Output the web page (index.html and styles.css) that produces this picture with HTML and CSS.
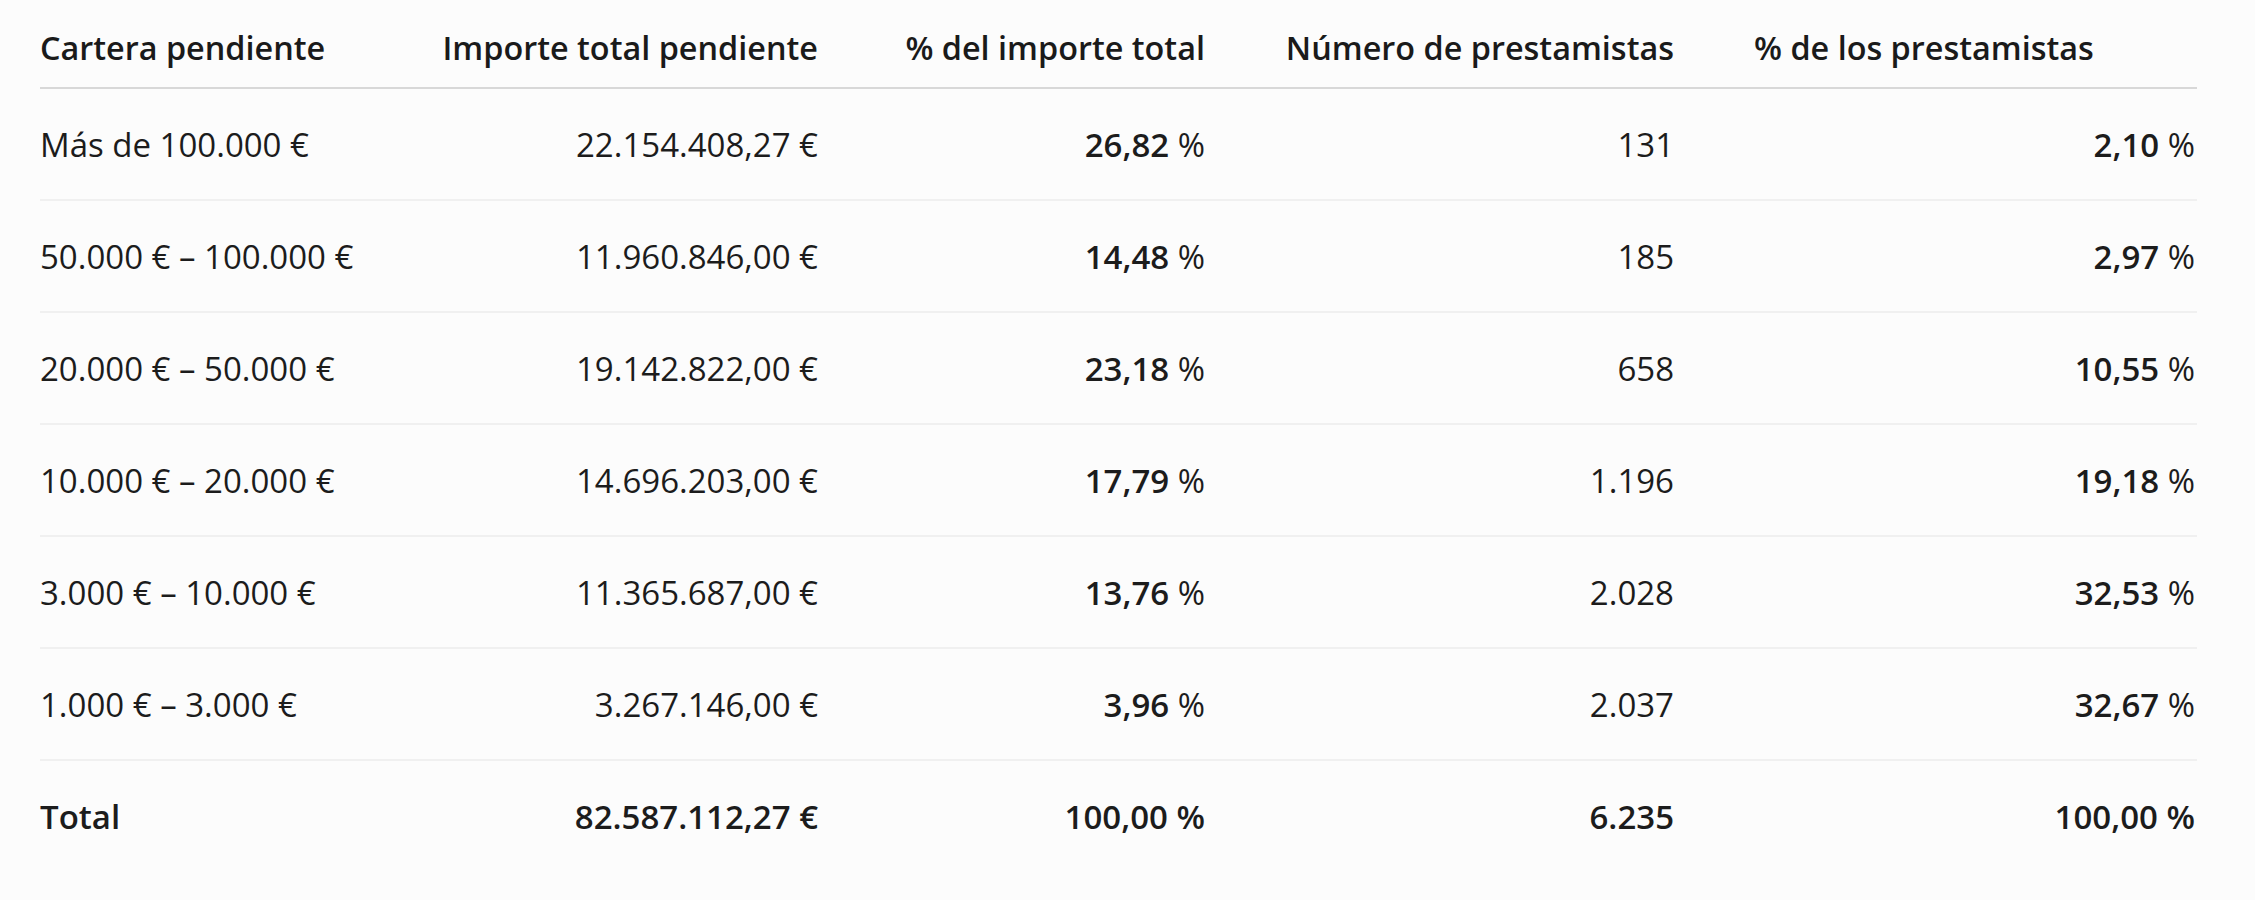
FILE: index.html
```html
<!DOCTYPE html>
<html lang="es">
<head>
<meta charset="utf-8">
<title>Cartera pendiente</title>
<link rel="stylesheet" href="styles.css">
</head>
<body>
<div class="wrap">
<table class="tbl">
  <colgroup>
    <col class="c1"><col class="c2"><col class="c3"><col class="c4"><col class="c5">
  </colgroup>
  <thead>
    <tr>
      <th class="left first">Cartera pendiente</th>
      <th class="right">Importe total pendiente</th>
      <th class="right">% del importe total</th>
      <th class="right">Número de prestamistas</th>
      <th class="left last">% de los prestamistas</th>
    </tr>
  </thead>
  <tbody>
    <tr>
      <td class="first">Más de 100.000 €</td>
      <td class="right">22.154.408,27 €</td>
      <td class="right"><b>26,82</b> %</td>
      <td class="right">131</td>
      <td class="right last"><b>2,10</b> %</td>
    </tr>
    <tr>
      <td class="first">50.000 € – 100.000 €</td>
      <td class="right">11.960.846,00 €</td>
      <td class="right"><b>14,48</b> %</td>
      <td class="right">185</td>
      <td class="right last"><b>2,97</b> %</td>
    </tr>
    <tr>
      <td class="first">20.000 € – 50.000 €</td>
      <td class="right">19.142.822,00 €</td>
      <td class="right"><b>23,18</b> %</td>
      <td class="right">658</td>
      <td class="right last"><b>10,55</b> %</td>
    </tr>
    <tr>
      <td class="first">10.000 € – 20.000 €</td>
      <td class="right">14.696.203,00 €</td>
      <td class="right"><b>17,79</b> %</td>
      <td class="right">1.196</td>
      <td class="right last"><b>19,18</b> %</td>
    </tr>
    <tr>
      <td class="first">3.000 € – 10.000 €</td>
      <td class="right">11.365.687,00 €</td>
      <td class="right"><b>13,76</b> %</td>
      <td class="right">2.028</td>
      <td class="right last"><b>32,53</b> %</td>
    </tr>
    <tr>
      <td class="first">1.000 € – 3.000 €</td>
      <td class="right">3.267.146,00 €</td>
      <td class="right"><b>3,96</b> %</td>
      <td class="right">2.037</td>
      <td class="right last"><b>32,67</b> %</td>
    </tr>
    <tr class="total">
      <td class="first">Total</td>
      <td class="right">82.587.112,27 €</td>
      <td class="right">100,00 %</td>
      <td class="right">6.235</td>
      <td class="right last">100,00 %</td>
    </tr>
  </tbody>
</table>
</div>
</body>
</html>
```
FILE: styles.css
```css
html, body {
  margin: 0;
  padding: 0;
  background: #fcfcfc;
}
body {
  font-family: "Open Sans", "Noto Sans", sans-serif;
  font-size: 33px;
  color: #1c1c1c;
}
.wrap {
  padding: 12px 58px 0 40px;
}
.tbl {
  width: 2157px;
  border-collapse: collapse;
  table-layout: fixed;
}
.c1 { width: 356px; }
.c2 { width: 462px; }
.c3 { width: 387px; }
.c4 { width: 469px; }
.c5 { width: 483px; }
.tbl th {
  font-size: 32.4px;
  font-weight: 600;
  height: 70px;
  padding: 0 40px 5px;
  border-bottom: 2px solid #d8d8d8;
  vertical-align: middle;
  white-space: nowrap;
  color: #1a1a1a;
}
.tbl th.right {
  padding-left: 0;
}
.tbl td {
  height: 110px;
  padding: 0 40px;
  border-bottom: 2px solid #f0f0f0;
  vertical-align: middle;
  white-space: nowrap;
  font-weight: 400;
}
.tbl b {
  font-weight: 600;
}
.tbl .total td {
  border-bottom: none;
  font-weight: 600;
}
.left { text-align: left; }
.right { text-align: right; }
.tbl .first { padding-left: 0; }
.tbl td.last { padding-right: 2px; }
```
